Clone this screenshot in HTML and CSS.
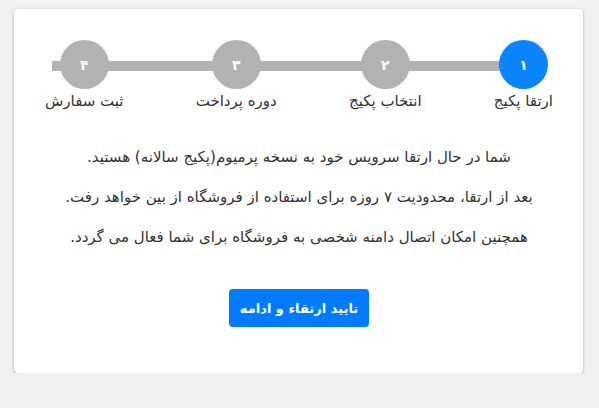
FILE: index.html
```html
<!DOCTYPE html>
<html lang="fa" dir="rtl">
<head>
  <meta charset="UTF-8" />
  <title>ارتقا پکیج</title>
  <link rel="stylesheet" href="styles.css">
</head>
<body>
  <div class="card">
    <ul class="steps">
      <li class="step active">
        <span class="circle">۱</span>
        <span class="label">ارتقا پکیج</span>
      </li>
      <li class="step">
        <span class="circle">۲</span>
        <span class="label">انتخاب پکیج</span>
      </li>
      <li class="step">
        <span class="circle">۳</span>
        <span class="label">دوره پرداخت</span>
      </li>
      <li class="step">
        <span class="circle">۴</span>
        <span class="label">ثبت سفارش</span>
      </li>
    </ul>

    <div class="info">
      <p>شما در حال ارتقا سرویس خود به نسخه پرمیوم(پکیج سالانه) هستید.</p>
      <p>بعد از ارتقا، محدودیت ۷ روزه برای استفاده از فروشگاه از بین خواهد رفت.</p>
      <p>همچنین امکان اتصال دامنه شخصی به فروشگاه برای شما فعال می گردد.</p>
    </div>

    <div class="actions">
      <button type="button">تایید ارتقاء و ادامه</button>
    </div>
  </div>
</body>
</html>
```

FILE: styles.css
```css
body {
  margin: 0;
  padding: 9px 16px 0 14px;
  background: #f0f0f0;
  font-family: "DejaVu Sans", sans-serif;
  color: #333;
}

.card {
  width: 569px;
  height: 364px;
  box-sizing: border-box;
  background: #fff;
  border-radius: 4px;
  box-shadow: 0 1px 3px rgba(0,0,0,0.3);
  padding: 31px 30px 0 31px;
}

.steps {
  position: relative;
  list-style: none;
  margin: 0;
  padding: 0;
  display: flex;
  justify-content: space-between;
}

.steps::before {
  content: "";
  position: absolute;
  top: 21px;
  left: 7px;
  right: 30px;
  height: 10px;
  background: #b2b2b2;
}

.step {
  position: relative;
  display: flex;
  flex-direction: column;
  align-items: center;
}

.circle {
  width: 49px;
  height: 49px;
  border-radius: 50%;
  background: #b2b2b2;
  color: #fff;
  font-size: 14px;
  font-weight: bold;
  display: flex;
  align-items: center;
  justify-content: center;
}

.step.active .circle {
  background: #0a84ff;
}

.label {
  margin-top: 2px;
  font-size: 15px;
  line-height: 20px;
  white-space: nowrap;
}

.info {
  margin-top: 36px;
  text-align: center;
  font-size: 15px;
  line-height: 20px;
}

.info p {
  margin: 0 0 20px;
}

.actions {
  display: flex;
  justify-content: center;
  margin-top: 42px;
}

button {
  width: 140px;
  height: 38px;
  padding: 0;
  border: none;
  border-radius: 4px;
  background: #007bff;
  color: #fff;
  font-family: "DejaVu Sans", sans-serif;
  font-size: 13px;
  font-weight: bold;
  cursor: pointer;
}
```
